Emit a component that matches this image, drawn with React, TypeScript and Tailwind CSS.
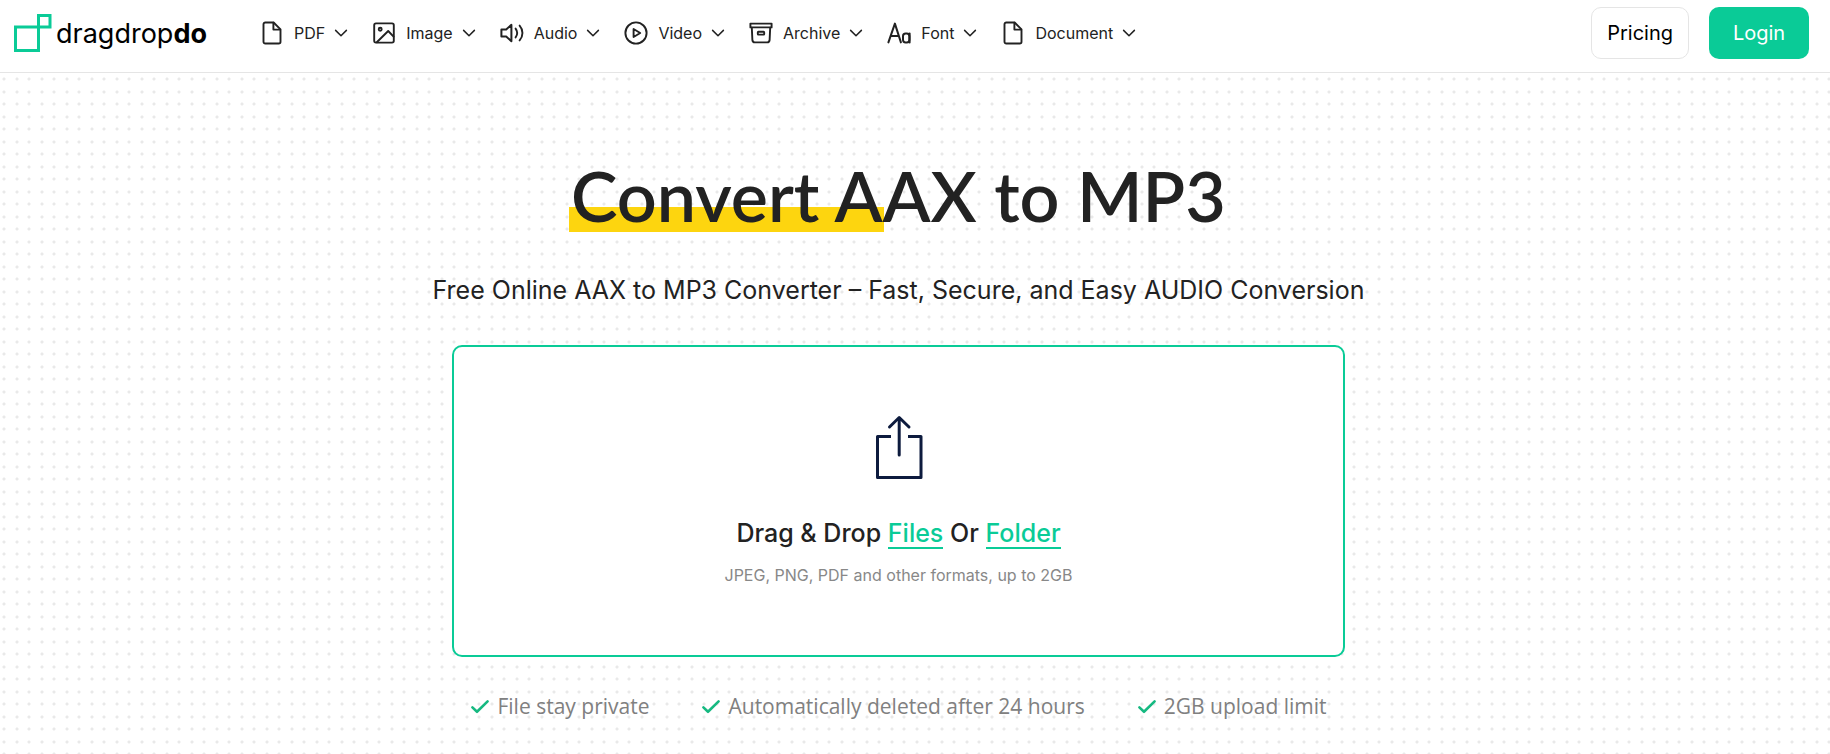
import React from 'react';

interface NavEntry {
  label: string;
  icon: React.ReactNode;
}

const Icon = ({ children }: { children: React.ReactNode }) => (
  <svg viewBox="0 0 24 24" fill="none" stroke="currentColor" strokeWidth="1.9" strokeLinecap="round" strokeLinejoin="round" className="size-6 shrink-0" aria-hidden="true">
    {children}
  </svg>
);

const FileIcon = () => (
  <Icon>
    <path d="M13.6 1.5H5.3a1.8 1.8 0 0 0-1.8 1.8v17.4a1.8 1.8 0 0 0 1.8 1.8h13.4a1.8 1.8 0 0 0 1.8-1.8V8.4z" />
    <path d="M13.4 1.8v6.8h6.8" />
  </Icon>
);

const ImageIcon = () => (
  <Icon>
    <rect x="2.2" y="2.4" width="19.6" height="19.2" rx="1.8" />
    <circle cx="8.2" cy="8.2" r="1.5" />
    <path d="M4.8 21.2 16.2 10l5.4 5.6" />
  </Icon>
);

const AudioIcon = () => (
  <Icon>
    <path d="M1.4 8.4h4.8l5.2-4.6v16.4l-5.2-4.6H1.4z" strokeWidth="2" />
    <path d="M15.6 7.6c1.9 2.6 1.9 6.2 0 8.8M19.6 4.6c3.8 4.2 3.8 10.6 0 14.8" />
  </Icon>
);

const VideoIcon = () => (
  <Icon>
    <circle cx="12" cy="12" r="10.6" />
    <path d="M9.6 8v8l6.6-4z" />
  </Icon>
);

const ArchiveIcon = () => (
  <Icon>
    <path d="M1.4 2.6h21.2v3.8H1.4z" />
    <path d="M2.8 6.6l.6 12.6a2.4 2.4 0 0 0 2.4 2.2h12.4a2.4 2.4 0 0 0 2.4-2.2l.6-12.6" />
    <rect x="8.8" y="10.8" width="6.4" height="2.8" rx=".6" />
  </Icon>
);

const FontIcon = () => (
  <Icon>
    <path d="M1.4 21.4 7.9 2.6l6 18.8M3.6 15h8.2" strokeWidth="2" />
    <rect x="16" y="12.6" width="6.4" height="8.8" rx="2.6" strokeWidth="2" />
    <path d="M22.6 12.4v9.2" strokeWidth="2" />
  </Icon>
);

const NAV: NavEntry[] = [
  { label: 'PDF', icon: <FileIcon /> },
  { label: 'Image', icon: <ImageIcon /> },
  { label: 'Audio', icon: <AudioIcon /> },
  { label: 'Video', icon: <VideoIcon /> },
  { label: 'Archive', icon: <ArchiveIcon /> },
  { label: 'Font', icon: <FontIcon /> },
  { label: 'Document', icon: <FileIcon /> },
];

const FEATURES = ['File stay private', 'Automatically deleted after 24 hours', '2GB upload limit'];

const Logo = () => (
  <a href="#" className="flex items-center gap-1 text-black">
    <svg viewBox="0 0 38 38" fill="none" stroke="#0acb97" strokeWidth="3" className="size-[38px]" aria-hidden="true">
      <path d="M1.5 13h23v23.5h-23zM24.5 1.5H36V13H24.5z" />
    </svg>
    <span className="pt-0.5 text-[27px] leading-8">dragdrop<b className="font-bold">do</b></span>
  </a>
);

const Header = () => (
  <header className="flex items-center justify-between border-b border-[#e5e5e5] bg-white pt-[7px] pb-[13px] pr-[21px] pl-3.5">
    <div className="flex items-center gap-[53px]">
      <Logo />
      <nav className="flex items-center gap-[23px]">
        {NAV.map(item => (
          <button key={item.label} type="button" className="flex items-center text-base text-[#222]">
            {item.icon}
            <span className="ml-2.5 mr-2">{item.label}</span>
            <svg viewBox="0 0 16 16" fill="none" stroke="currentColor" strokeWidth="1.5" strokeLinecap="round" strokeLinejoin="round" className="size-4" aria-hidden="true">
              <path d="M2.6 5.4 8 10.8l5.4-5.4" />
            </svg>
          </button>
        ))}
      </nav>
    </div>
    <div className="flex items-center gap-5 text-xl">
      <a href="#" className="flex h-[52px] items-center rounded-[10px] border border-[#e5e5e5] px-[15px] text-black">Pricing</a>
      <button type="button" className="h-[52px] w-[100px] rounded-[10px] bg-[#0acb97] text-white">Login</button>
    </div>
  </header>
);

const DropZone = () => (
  <section className="mt-[39px] flex w-full max-w-[893px] flex-col items-center rounded-[10px] border-2 border-[#0acb97] bg-white pt-[68px] pb-[68px]">
    <svg viewBox="0 0 48 64" fill="none" stroke="#0d1b3e" strokeWidth="3" strokeLinecap="round" strokeLinejoin="round" className="h-16 w-12" aria-hidden="true">
      <path d="M16 21.5H2.5v41h43.5v-41H33" strokeLinecap="butt" />
      <path d="M24.2 40V2.8M14.5 12l9.7-9.5L34 12" />
    </svg>
    <h2 className="mt-9 text-[25px] leading-9 font-medium text-[#222]">
      Drag &amp; Drop{' '}
      <button type="button" className="border-b-2 border-[#0acb97] leading-7 text-[#0acb97]">Files</button>
      {' '}Or{' '}
      <button type="button" className="border-b-2 border-[#0acb97] leading-7 text-[#0acb97]">Folder</button>
    </h2>
    <p className="mt-3 text-base leading-6 text-[#888]">JPEG, PNG, PDF and other formats, up to 2GB</p>
  </section>
);

export default function App() {
  return (
    <div className="flex min-h-screen flex-col bg-white font-['Inter',sans-serif]">
      <Header />
      {/* Dotted backdrop: one 25px tile carries four dots */}
      <main className="flex flex-1 flex-col items-center bg-[radial-gradient(circle_at_4px_6px,#e9e9e9_1px,transparent_2px),radial-gradient(circle_at_17px_6px,#e9e9e9_1px,transparent_2px),radial-gradient(circle_at_4px_19px,#e9e9e9_1px,transparent_2px),radial-gradient(circle_at_17px_19px,#e9e9e9_1px,transparent_2px)] bg-size-[25px_25px] pt-[78px] pr-[33px] pb-8">
        <h1 className="bg-[linear-gradient(#fdd50f,#fdd50f)] bg-size-[315px_25px] bg-position-[0_56px] bg-no-repeat px-0.5 font-['Lato',sans-serif] text-[70px] leading-[88px] font-semibold text-[#222]">
          Convert AAX to MP3
        </h1>
        <p className="mt-[35px] text-[25px] leading-8 text-[#222]">Free Online AAX to MP3 Converter – Fast, Secure, and Easy AUDIO Conversion</p>
        <DropZone />
        <ul className="mt-[35px] flex flex-wrap justify-center gap-[52px] font-['Open_Sans',sans-serif] text-[21px] leading-7 text-[#808080]">
          {FEATURES.map(f => (
            <li key={f} className="flex items-center gap-[7px]">
              <svg viewBox="0 0 20 20" fill="none" stroke="#16b981" strokeWidth="2.6" strokeLinecap="round" strokeLinejoin="round" className="size-5" aria-hidden="true">
                <path d="M2.4 11.4 7 15.8 17.6 5.4" />
              </svg>
              {f}
            </li>
          ))}
        </ul>
      </main>
    </div>
  );
}
